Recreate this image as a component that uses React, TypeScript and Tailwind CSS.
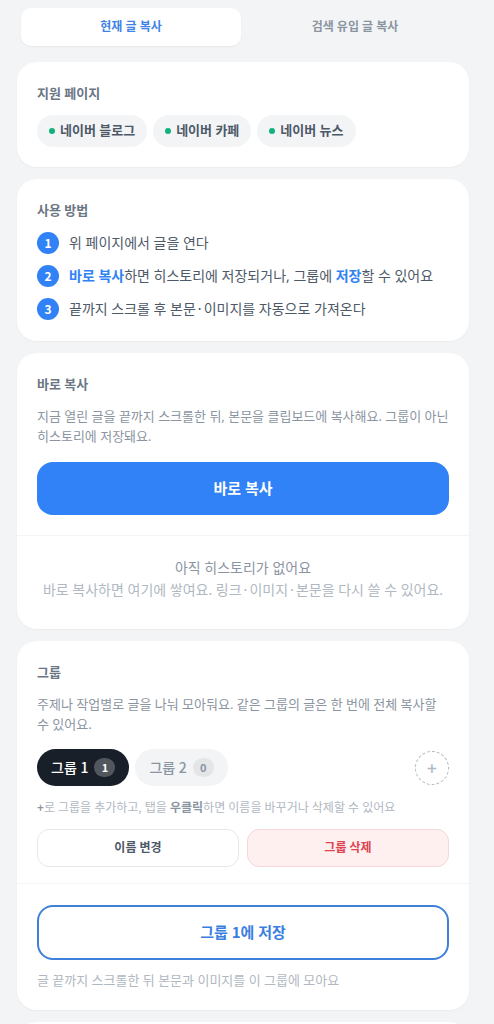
import { useState } from "react";
import type { ReactNode } from "react";
import clsx from "clsx";

function Cjk({ children }: { children: ReactNode }) {
  return (
    <span className="font-['Noto_Sans_CJK_KR','Noto_Sans',sans-serif] leading-none">{children}</span>
  );
}

const supportedPages = ["네이버 블로그", "네이버 카페", "네이버 뉴스"];

const steps: ReactNode[] = [
  "위 페이지에서 글을 연다",
  <>
    <b className="font-bold text-[#3182f6]">바로 복사</b>하면 히스토리에 저장되거나, 그룹에{" "}
    <b className="font-bold text-[#3182f6]">저장</b>할 수 있어요
  </>,
  <>
    끝까지 스크롤 후 본문<Cjk>·</Cjk>이미지를 자동으로 가져온다
  </>,
];

const groups = [
  { id: 1, count: 1 },
  { id: 2, count: 0 },
];

function Card({ children }: { children?: ReactNode }) {
  return (
    <section className="min-h-12 shrink-0 rounded-[20px] bg-white shadow-[0_1px_2px_rgba(0,0,0,0.04)]">
      {children}
    </section>
  );
}

function CardTitle({ children }: { children: ReactNode }) {
  return (
    <h2 className="mb-[11px] text-[13px] leading-[22px] font-semibold text-[#6b7684]">{children}</h2>
  );
}

export default function App() {
  const [mode, setMode] = useState(0);
  const [active, setActive] = useState(0);

  return (
    <main className="flex h-screen flex-col gap-3 overflow-y-auto bg-[#f2f4f6] pt-1 pr-[25px] pl-[17px] font-['Noto_Sans','Noto_Sans_CJK_KR',sans-serif] break-keep [scrollbar-width:none]">
      <nav className="flex gap-1 p-1">
        {["현재 글 복사", "검색 유입 글 복사"].map((label, i) => (
          <button
            key={label}
            type="button"
            onClick={() => setMode(i)}
            className={clsx(
              "h-[38px] flex-1 rounded-[10px] text-xs font-semibold",
              mode === i
                ? "bg-white text-[#3f83e6] shadow-[0_1px_2px_rgba(0,0,0,0.05)]"
                : "text-[#8b95a1]",
            )}
          >
            {label}
          </button>
        ))}
      </nav>

      <Card>
        <div className="p-5">
          <CardTitle>지원 페이지</CardTitle>
          <ul className="flex flex-wrap gap-1.5">
            {supportedPages.map((page) => (
              <li
                key={page}
                className="flex h-8 items-center gap-[5px] rounded-full bg-[#f2f4f6] px-3 text-[13px] font-semibold text-[#4e5968]"
              >
                <span className="size-1.5 rounded-full bg-[#12b27c]" />
                {page}
              </li>
            ))}
          </ul>
        </div>
      </Card>

      <Card>
        <div className="p-5 pb-[21px]">
          <CardTitle>사용 방법</CardTitle>
          <ol className="flex flex-col gap-[11px]">
            {steps.map((step, i) => (
              <li key={i} className="flex gap-2.5 text-sm leading-[22px] text-[#4e5968]">
                <span className="flex size-[22px] shrink-0 items-center justify-center rounded-full bg-[#3182f6] text-xs font-bold text-white">
                  <Cjk>{i + 1}</Cjk>
                </span>
                <span>{step}</span>
              </li>
            ))}
          </ol>
        </div>
      </Card>

      <Card>
        <div className="p-5">
          <CardTitle>바로 복사</CardTitle>
          <p className="mb-4 text-[13px] leading-5 text-[#8b95a1]">
            지금 열린 글을 끝까지 스크롤한 뒤, 본문을 클립보드에 복사해요. 그룹이 아닌 히스토리에
            저장돼요.
          </p>
          <button
            type="button"
            className="h-[53px] w-full rounded-2xl bg-[#3182f6] text-[15px] font-semibold text-white"
          >
            바로 복사
          </button>
        </div>
        <div className="border-t border-[#f2f4f6] px-5 pt-[21px] pb-7 text-center text-sm leading-[22px]">
          <p className="text-[#8b95a1]">아직 히스토리가 없어요</p>
          <p className="text-[#b0b8c1]">
            바로 복사하면 여기에 쌓여요. 링크<Cjk>·</Cjk>이미지<Cjk>·</Cjk>본문을 다시 쓸 수 있어요.
          </p>
        </div>
      </Card>

      <Card>
        <div className="px-5 pt-5 pb-4">
          <CardTitle>그룹</CardTitle>
          <p className="mb-[15px] text-[13px] leading-5 text-[#8b95a1]">
            주제나 작업별로 글을 나눠 모아둬요. 같은 그룹의 글은 한 번에 전체 복사할 수 있어요.
          </p>
          <div className="flex items-center gap-1.5">
            {groups.map((group, i) => (
              <button
                key={group.id}
                type="button"
                onClick={() => setActive(i)}
                className={clsx(
                  "flex h-[37px] items-center gap-1.5 rounded-full px-3.5 text-sm font-medium",
                  active === i ? "bg-[#191f28] text-white" : "bg-[#f2f4f6] text-[#8b95a1]",
                )}
              >
                <span>
                  그룹 <Cjk>{group.id}</Cjk>
                </span>
                <span
                  className={clsx(
                    "flex h-[19px] min-w-[21px] items-center justify-center rounded-full text-[11px] font-bold",
                    active === i ? "bg-white/25" : "bg-black/6",
                  )}
                >
                  <Cjk>{group.count}</Cjk>
                </span>
              </button>
            ))}
            <button
              type="button"
              aria-label="그룹 추가"
              className="ml-auto flex size-[34px] items-center justify-center rounded-full border border-dashed border-[#b0b8c1] text-lg leading-none font-medium text-[#b0b8c1]"
            >
              +
            </button>
          </div>
          <p className="mt-3 mb-[11px] text-xs leading-5 text-[#b0b8c1]">
            <b className="font-semibold text-[#8b95a1]">+</b>로 그룹을 추가하고, 탭을{" "}
            <b className="font-semibold text-[#8b95a1]">우클릭</b>하면 이름을 바꾸거나 삭제할 수 있어요
          </p>
          <div className="flex gap-2">
            <button
              type="button"
              className="h-[38px] flex-1 rounded-xl border border-[#e5e8eb] bg-white text-xs font-semibold text-[#4e5968]"
            >
              이름 변경
            </button>
            <button
              type="button"
              className="h-[38px] flex-1 rounded-xl border border-[#f5d8da] bg-[#fff0f0] text-xs font-semibold text-[#dc4450]"
            >
              그룹 삭제
            </button>
          </div>
        </div>
        <div className="border-t border-[#f2f4f6] px-5 pt-[21px] pb-5">
          <button
            type="button"
            className="h-[55px] w-full rounded-2xl border-2 border-[#3f80dc] bg-white text-[15px] font-semibold text-[#3a7edf]"
          >
            그룹 <Cjk>{groups[active].id}</Cjk>에 저장
          </button>
          <p className="mt-2.5 text-[13px] leading-5 text-[#b0b8c1]">
            글 끝까지 스크롤한 뒤 본문과 이미지를 이 그룹에 모아요
          </p>
        </div>
      </Card>

      <Card />
    </main>
  );
}
